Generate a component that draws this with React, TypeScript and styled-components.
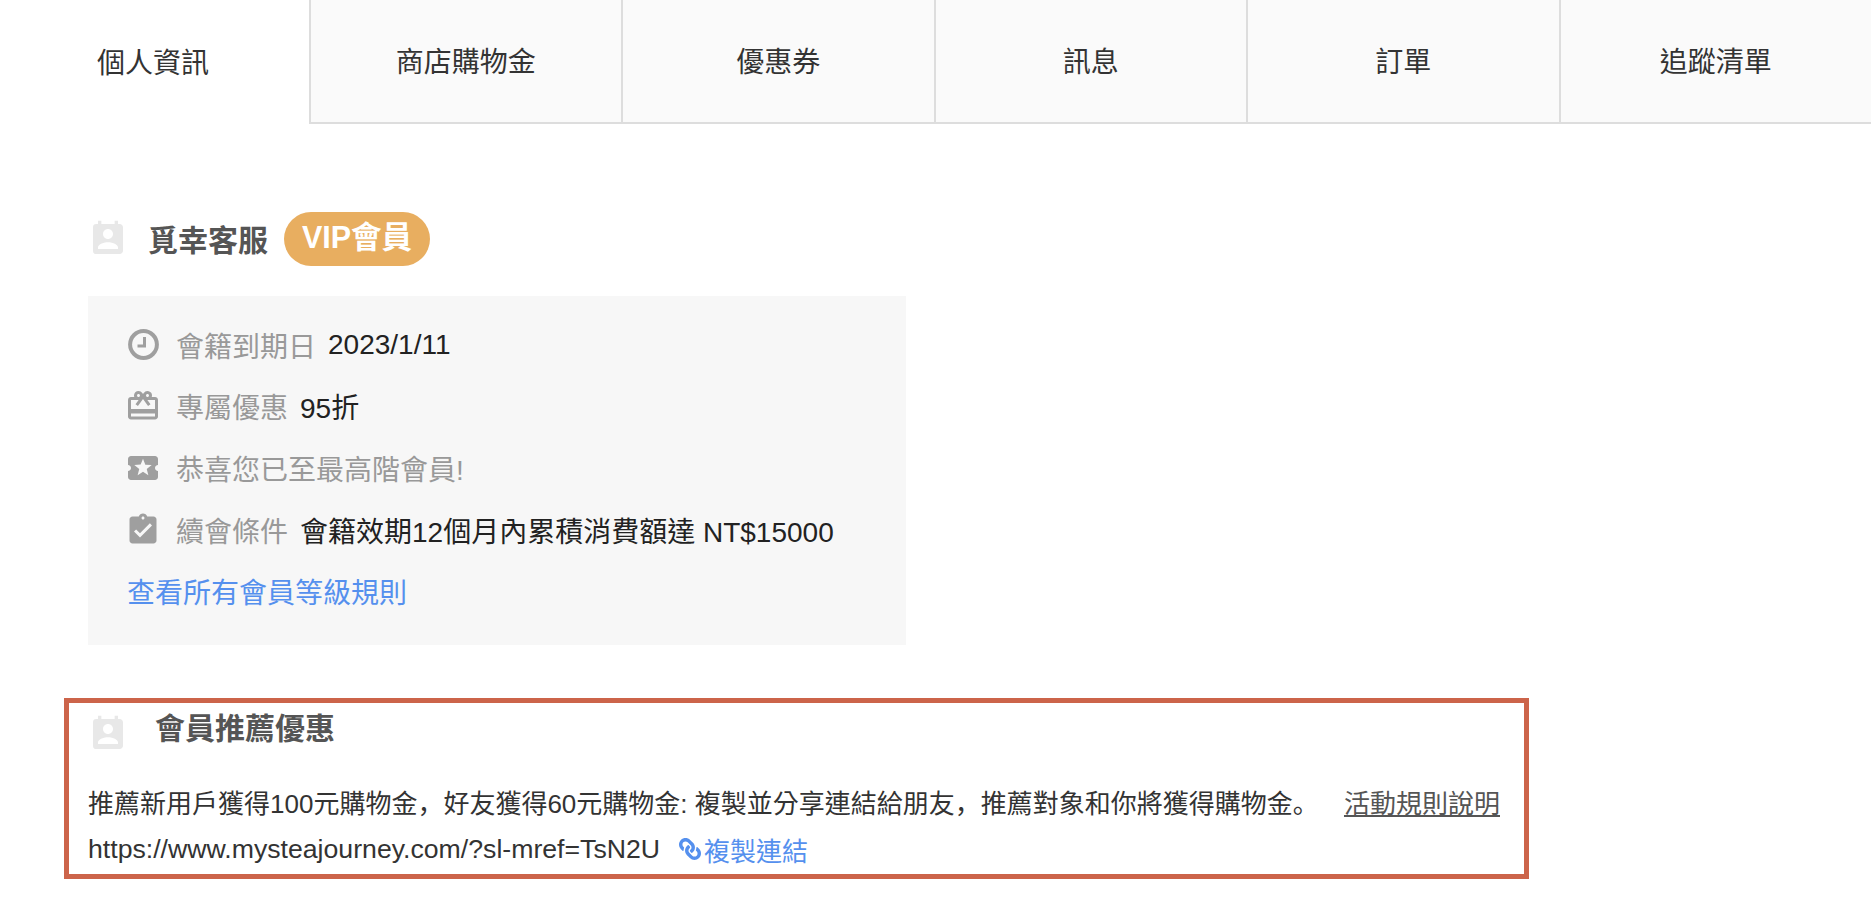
import React from 'react';
import styled, { createGlobalStyle } from 'styled-components';
import { MdAssignmentTurnedIn, MdLocalActivity, MdPermContactCalendar, MdOutlineCardGiftcard } from 'react-icons/md';
import { FaLink } from 'react-icons/fa';

const Global = createGlobalStyle`
  html, body { margin: 0; padding: 0; background: #fff; }
  body { font-family: "Liberation Sans", "Noto Sans CJK TC", sans-serif; color: #333; }
`;

const Page = styled.div`
  width: 1872px;
  height: 904px;
  overflow: hidden;
`;

const TabBar = styled.nav`
  display: flex;
  height: 124px;
`;

const Tab = styled.div<{ $active?: boolean }>`
  box-sizing: border-box;
  flex: ${p => (p.$active ? '0 0 308.5px' : '0 0 312.5px')};
  display: flex;
  align-items: center;
  justify-content: ${p => (p.$active ? 'flex-start' : 'center')};
  padding: ${p => (p.$active ? '0 0 0 97px' : '0')};
  padding-bottom: 2px;
  font-size: 28px;
  color: #333;
  background: ${p => (p.$active ? '#fff' : '#fafafa')};
  border-left: ${p => (p.$active ? 'none' : '2px solid #ddd')};
  border-bottom: ${p => (p.$active ? 'none' : '2px solid #ddd')};
`;

const Member = styled.section`
  margin: 88px 0 0 88px;
`;

const TitleRow = styled.div`
  display: flex;
  align-items: center;
  height: 54px;
`;

const TitleIcon = styled(MdPermContactCalendar)`
  flex: none;
  width: 40px;
  height: 40px;
  color: #e8e8e8;
`;

const Title = styled.h2`
  margin: 4px 0 0 20px;
  font-size: 30px;
  line-height: 40px;
  font-weight: 700;
  color: #555;
`;

const Badge = styled.span`
  margin-left: 16px;
  width: 146px;
  height: 54px;
  border-radius: 27px;
  background: #e8ae60;
  color: #fff;
  font-size: 30.5px;
  font-weight: 700;
  line-height: 50px;
  display: flex;
  justify-content: center;
`;

const InfoBox = styled.div`
  box-sizing: border-box;
  width: 818px;
  height: 349px;
  margin-top: 30px;
  padding: 18px 0 0 39px;
  background: #f7f7f7;
`;

const InfoRow = styled.div`
  display: flex;
  align-items: center;
  height: 61.6px;
  font-size: 28px;
`;

const IconSlot = styled.span`
  flex: none;
  width: 32px;
  height: 32px;
  margin-right: 17px;
  color: #9f9f9f;
  display: flex;
  align-items: center;
  justify-content: center;
  svg { flex: none; }
`;

const Label = styled.span`
  color: #999;
`;

const Value = styled.span`
  margin-left: 12px;
  color: #222;
`;

const RuleLink = styled.a`
  color: #5590ee;
  text-decoration: none;
`;

const Referral = styled.section`
  box-sizing: border-box;
  width: 1465px;
  height: 181px;
  margin: 53px 0 0 64px;
  padding: 0 24px 0 19px;
  border: 5px solid #cc644a;
`;

const ReferralHead = styled.div`
  display: flex;
  align-items: center;
  height: 54px;
`;

const ReferralIcon = styled(MdPermContactCalendar)`
  flex: none;
  width: 40px;
  height: 40px;
  margin-top: 8px;
  color: #e8e8e8;
`;

const ReferralTitle = styled.h2`
  margin: 0 0 3px 27px;
  font-size: 30px;
  line-height: 40px;
  font-weight: 700;
  color: #555;
`;

const Line = styled.div`
  display: flex;
  align-items: center;
  justify-content: space-between;
  height: 46px;
  font-size: 26px;
  color: #333;
  white-space: nowrap;
`;

const FirstLine = styled(Line)`
  margin-top: 21px;
`;

const UrlLine = styled(Line)`
  justify-content: flex-start;
  margin-top: 2px;
`;

const Url = styled.span`
  font-size: 26.66px;
`;

const Punct = styled.span`
  font-family: "Noto Sans CJK SC", sans-serif;
`;

const Rules = styled.a`
  color: #555;
  text-decoration: underline;
`;

const CopyLink = styled.a`
  margin-left: 19px;
  display: flex;
  align-items: center;
  color: #5590ee;
`;

const ChainIcon = styled(FaLink)`
  width: 22px;
  height: 22px;
  margin-right: 3px;
  transform: scaleX(-1);
`;

function ClockIcon() {
  return (
    <svg width="31" height="31" viewBox="0 0 31 31" fill="none" stroke="currentColor">
      <circle cx="15.5" cy="15.5" r="13.4" strokeWidth="4" />
      <path d="M16.5 8v9h-7" strokeWidth="3" />
    </svg>
  );
}

const tabs = ['個人資訊', '商店購物金', '優惠券', '訊息', '訂單', '追蹤清單'];

export default function App() {
  return (
    <Page>
      <Global />
      <TabBar>
        {tabs.map((t, i) => (
          <Tab key={t} $active={i === 0}>{t}</Tab>
        ))}
      </TabBar>
      <Member>
        <TitleRow>
          <TitleIcon />
          <Title>覓幸客服</Title>
          <Badge>VIP會員</Badge>
        </TitleRow>
        <InfoBox>
          <InfoRow>
            <IconSlot><ClockIcon /></IconSlot>
            <Label>會籍到期日</Label>
            <Value>2023/1/11</Value>
          </InfoRow>
          <InfoRow>
            <IconSlot><MdOutlineCardGiftcard size={36} /></IconSlot>
            <Label>專屬優惠</Label>
            <Value>95折</Value>
          </InfoRow>
          <InfoRow>
            <IconSlot><MdLocalActivity size={36} /></IconSlot>
            <Label>恭喜您已至最高階會員!</Label>
          </InfoRow>
          <InfoRow>
            <IconSlot><MdAssignmentTurnedIn size={36} /></IconSlot>
            <Label>續會條件</Label>
            <Value>會籍效期12個月內累積消費額達 NT$15000</Value>
          </InfoRow>
          <InfoRow>
            <RuleLink>查看所有會員等級規則</RuleLink>
          </InfoRow>
        </InfoBox>
      </Member>
      <Referral>
        <ReferralHead>
          <ReferralIcon />
          <ReferralTitle>會員推薦優惠</ReferralTitle>
        </ReferralHead>
        <FirstLine>
          <span>推薦新用戶獲得100元購物金<Punct>，</Punct>好友獲得60元購物金: 複製並分享連結給朋友<Punct>，</Punct>推薦對象和你將獲得購物金<Punct>。</Punct></span>
          <Rules>活動規則說明</Rules>
        </FirstLine>
        <UrlLine>
          <Url>https://www.mysteajourney.com/?sl-mref=TsN2U</Url>
          <CopyLink><ChainIcon />複製連結</CopyLink>
        </UrlLine>
      </Referral>
    </Page>
  );
}
